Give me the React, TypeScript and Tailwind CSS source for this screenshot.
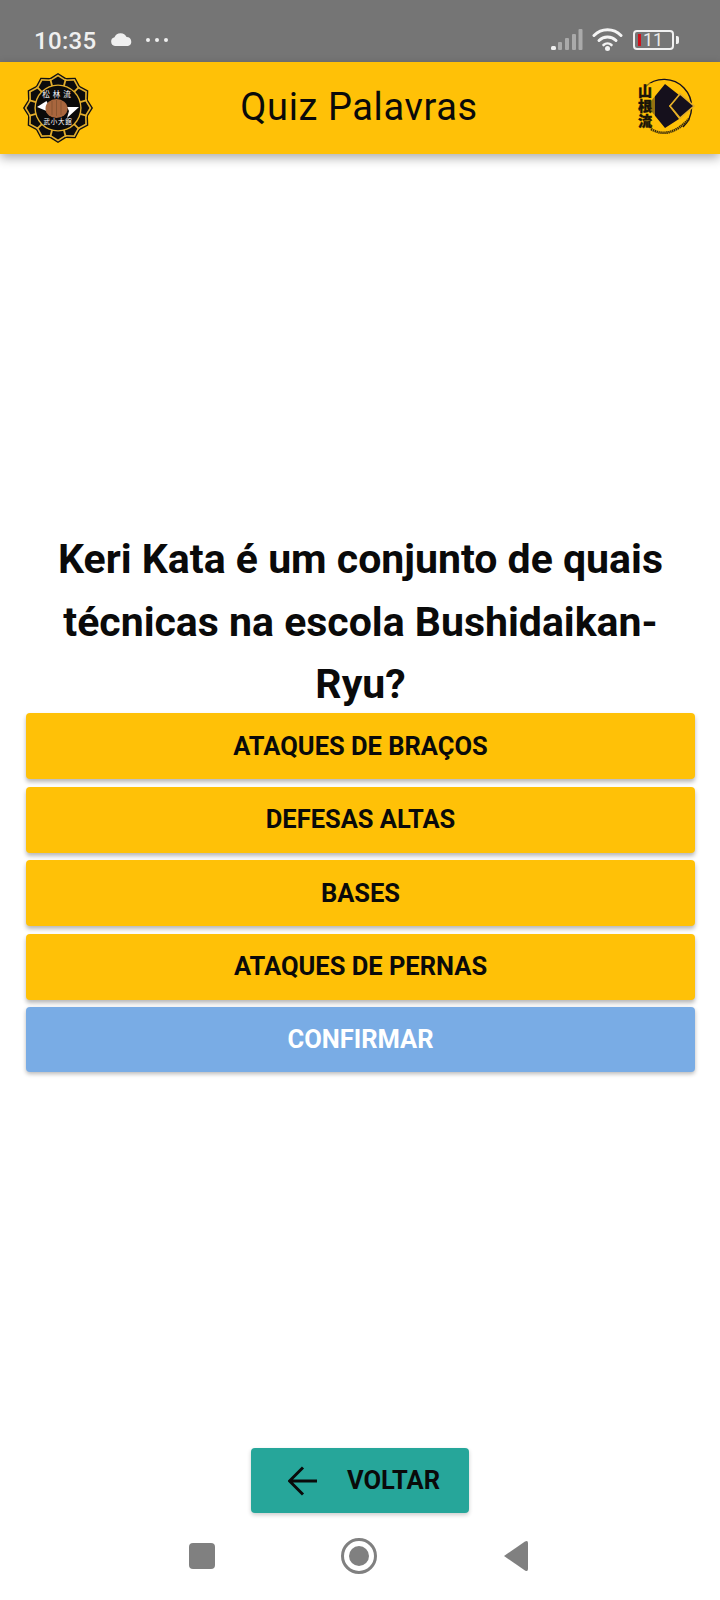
import React from "react";

const roboto = { fontFamily: "Roboto, sans-serif" };
const cjk = { fontFamily: '"Noto Sans CJK JP", sans-serif' };

function ring(r1: number, r2: number) {
  const pts: string[] = [];
  for (let i = 0; i < 12; i++) {
    const a = ((i * 30 - 90) * Math.PI) / 180;
    const b = ((i * 30 - 75) * Math.PI) / 180;
    pts.push(`${(r1 * Math.cos(a)).toFixed(2)},${(r1 * Math.sin(a)).toFixed(2)}`);
    pts.push(`${(r2 * Math.cos(b)).toFixed(2)},${(r2 * Math.sin(b)).toFixed(2)}`);
  }
  return pts.join(" ");
}

function LeftLogo() {
  const lobes = Array.from({ length: 12 }, (_, i) => i * 30);
  return (
    <svg width="70" height="70" viewBox="-35 -35 70 70" className="shrink-0">
      <polygon points={ring(35, 31)} fill="#111" />
      <polygon points={ring(33.4, 29.6)} fill="#e2ae2c" />
      <polygon points={ring(31.4, 28)} fill="#0c0c0c" />
      {lobes.map((a) => (
        <rect key={a} x="-0.9" y="-30" width="1.8" height="8" fill="#e2ae2c" transform={`rotate(${a + 15})`} />
      ))}
      <circle r="23.6" fill="#e2ae2c" />
      <circle r="22.2" fill="#0a0a0a" />
      <path d="M-21 -1 L-11.5 -7 L-10 -4 L-11.5 3 Z" fill="#fff" />
      <path d="M21 -1 L9 -1 L11 3 L9 10 Z" fill="#fff" />
      <ellipse cx="-1.5" cy="0.5" rx="11" ry="9.5" fill="#a8663e" />
      <path d="M-6 -7 V7 M-1.5 -8 V8 M3 -7 V7" stroke="#82502f" strokeWidth="0.8" />
      <text x="0" y="-11" textAnchor="middle" fill="#fff" fontSize="7.5" letterSpacing="3" style={cjk}>
        松林流
      </text>
      <text x="0" y="16" textAnchor="middle" fill="#fff" fontSize="6.5" letterSpacing="0.8" style={cjk}>
        武小大館
      </text>
    </svg>
  );
}

function RightLogo() {
  return (
    <svg width="62" height="62" viewBox="0 0 62 62" className="shrink-0">
      <path d="M12 10 A27 27 0 1 1 50 50" fill="none" stroke="#15101c" strokeWidth="1.4" />
      <path d="M32 7 L46 18 L36 29 L46 42 L32 51 L14 29 Z" fill="#15101c" />
      <path d="M37 29 L47 17 L61 29 L47 41 Z" fill="#15101c" stroke="#e2ae2c" strokeWidth="1.6" strokeLinejoin="miter" />
      <path d="M2 6 H22 V52 H2 Z" fill="#ffc107" opacity="0.55" />
      <text
        x="12"
        y="7"
        fontSize="14"
        fontWeight="900"
        fill="#1a1408"
        stroke="#1a1408"
        strokeWidth="0.4"
        letterSpacing="1"
        style={{ ...cjk, writingMode: "vertical-rl" }}
      >
        山根流
      </text>
      <path d="M18 52 Q36 63 56 42" fill="none" stroke="#3a2c0a" strokeWidth="2.6" strokeDasharray="1.4 0.6" />
    </svg>
  );
}

function StatusBar() {
  return (
    <div className="flex h-[62px] items-end justify-between bg-[#757575] pb-[7px] pl-[34px] pr-[41px]" style={roboto}>
      <div className="flex items-center">
        <span className="text-[24px] font-medium leading-[28px] tracking-[0.3px] text-[#f0f0f0]">10:35</span>
        <svg width="23" height="14" viewBox="0 0 23 14" className="ml-[14px] mb-[4px]">
          <path d="M5 14 A4.5 4.5 0 0 1 4.5 5.2 A6.6 6.6 0 0 1 16.6 5 A4.6 4.6 0 0 1 18 14 Z" fill="#f0f0f0" />
        </svg>
        <div className="mb-[2px] ml-[13px] flex gap-[5px]">
          <span className="h-[4px] w-[4px] rounded-full bg-[#f0f0f0]" />
          <span className="h-[4px] w-[4px] rounded-full bg-[#f0f0f0]" />
          <span className="h-[4px] w-[4px] rounded-full bg-[#f0f0f0]" />
        </div>
      </div>
      <div className="mb-[4px] flex items-center">
        <svg width="32" height="22" viewBox="0 0 32 22">
          <rect x="0" y="17" width="5" height="4" rx="1.5" fill="#f0f0f0" />
          <rect x="7" y="13" width="4" height="8" rx="1" fill="#aaaaaa" />
          <rect x="14" y="9" width="4" height="12" rx="1" fill="#aaaaaa" />
          <rect x="21" y="5" width="4" height="16" rx="1" fill="#aaaaaa" />
          <rect x="27.5" y="0" width="4" height="21" rx="1" fill="#aaaaaa" />
        </svg>
        <svg width="31" height="23" viewBox="0 0 31 23" className="ml-[9px]">
          <path d="M2 7.5 A19 19 0 0 1 29 7.5" fill="none" stroke="#f4f4f4" strokeWidth="3" strokeLinecap="round" />
          <path d="M7 12.5 A12 12 0 0 1 24 12.5" fill="none" stroke="#f4f4f4" strokeWidth="3" strokeLinecap="round" />
          <path d="M11.5 17 A6 6 0 0 1 19.5 17" fill="none" stroke="#f4f4f4" strokeWidth="2.6" strokeLinecap="round" />
          <circle cx="15.5" cy="20.5" r="2.5" fill="#f4f4f4" />
        </svg>
        <div className="ml-[10px] flex items-center">
          <div className="flex h-[20px] w-[41px] items-center rounded-[4px] border-2 border-[#f0f0f0] pl-[3px]">
            <span className="h-[12px] w-[3px] bg-[#d0101a]" />
            <span className="ml-[2px] text-[18px] leading-[16px] text-[#e8e8e8]">11</span>
          </div>
          <span className="ml-[2px] h-[8px] w-[3px] rounded-r-[2px] bg-[#f0f0f0]" />
        </div>
      </div>
    </div>
  );
}

function OptionButton({ label }: { label: string }) {
  return (
    <button className="flex h-[66px] w-full items-center justify-center rounded-[4px] bg-[#ffc107] text-[25.5px] font-bold text-[#0a0a0a] shadow-[0_3px_4px_rgba(0,0,0,0.28)]">
      {label}
    </button>
  );
}

function NavBar() {
  return (
    <div className="flex h-[87px] items-start pt-[30px]">
      <span className="ml-[189px] h-[26px] w-[26px] rounded-[4px] bg-[#808080]" />
      <span className="ml-[126px] mt-[-5px] flex h-[36px] w-[36px] items-center justify-center rounded-full border-[3px] border-[#808080]">
        <span className="h-[20px] w-[20px] rounded-full bg-[#808080]" />
      </span>
      <svg width="26" height="32" viewBox="0 0 26 32" className="ml-[126px] mt-[-3px]">
        <path d="M1 16 L22 1.5 Q25 0 25 3 V29 Q25 32 22 30.5 Z" fill="#808080" />
      </svg>
    </div>
  );
}

export default function App() {
  return (
    <div className="flex h-[1600px] w-[720px] flex-col overflow-hidden bg-white" style={roboto}>
      <StatusBar />
      <header className="relative z-10 grid h-[92px] grid-cols-[1fr_auto_1fr] items-center bg-[#ffc107] pl-[23px] pr-[25px] shadow-[0_4px_10px_rgba(0,0,0,0.32)]">
        <LeftLogo />
        <h1 className="mb-[2px] text-[38px] font-normal leading-none tracking-[0.6px] text-[#0a0a0a]">Quiz Palavras</h1>
        <div className="justify-self-end">
          <RightLogo />
        </div>
      </header>
      <main className="flex flex-1 flex-col pl-[26px] pr-[25px] pt-[374px]">
        <h2 className="px-[4px] text-center text-[41px] font-bold leading-[62.5px] text-[#0a0a0a]">
          Keri Kata é um conjunto de quais técnicas na escola Bushidaikan-Ryu?
        </h2>
        <div className="mt-[-2.5px] flex flex-col gap-[7.5px]">
          <OptionButton label="ATAQUES DE BRAÇOS" />
          <OptionButton label="DEFESAS ALTAS" />
          <OptionButton label="BASES" />
          <OptionButton label="ATAQUES DE PERNAS" />
          <button className="flex h-[65px] w-full items-center justify-center rounded-[4px] bg-[#79ace5] text-[25.5px] font-bold text-white shadow-[0_2px_4px_rgba(0,0,0,0.28)]">
            CONFIRMAR
          </button>
        </div>
      </main>
      <div className="flex justify-center">
        <button className="flex h-[65px] w-[218px] items-center rounded-[4px] bg-[#26a69a] pl-[37px] text-[25.5px] font-bold text-[#0a0a0a] shadow-[0_2px_4px_rgba(0,0,0,0.2)]">
          <svg width="30" height="30" viewBox="0 0 30 30" className="shrink-0">
            <path d="M29 15 H2 M15 1.5 L1.5 15 L15 28.5" fill="none" stroke="#0a0a0a" strokeWidth="3" />
          </svg>
          <span className="ml-[29px]">VOLTAR</span>
        </button>
      </div>
      <NavBar />
    </div>
  );
}
